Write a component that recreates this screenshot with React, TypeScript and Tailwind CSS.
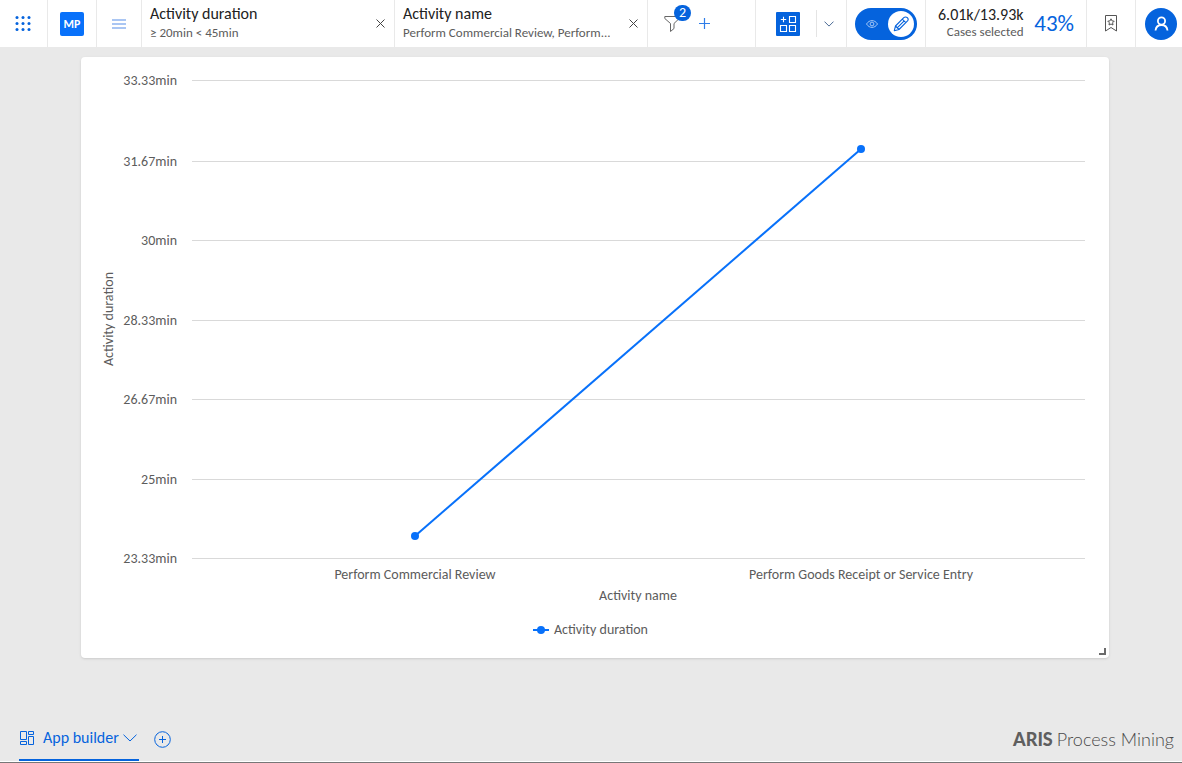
import { ReactNode } from "react";

const ticks = [
  { label: "33.33min", y: 23 },
  { label: "31.67min", y: 104 },
  { label: "30min", y: 183 },
  { label: "28.33min", y: 263 },
  { label: "26.67min", y: 342 },
  { label: "25min", y: 422 },
  { label: "23.33min", y: 501 },
];

const points = [
  { label: "Perform Commercial Review", x: 334, y: 479 },
  { label: "Perform Goods Receipt or Service Entry", x: 780, y: 92 },
];

const FilterCell = ({ title, value }: { title: string; value: string }) => (
  <div className="flex w-[253px] items-center justify-between border-r border-[#e9e9e9] px-2">
    <div className="min-w-0 pb-[2px]">
      <p className="text-[16px] leading-5 text-[#222]">{title}</p>
      <p className="truncate text-[13px] leading-[18px] text-[#5c5c5c]">
        {value}
      </p>
    </div>
    <button
      type="button"
      aria-label={`Remove ${title}`}
      className="flex h-6 w-3 items-center justify-center"
    >
      <svg width="9" height="9" viewBox="0 0 9 9" stroke="#444" fill="none">
        <path d="M.5.5l8 8M8.5.5l-8 8" />
      </svg>
    </button>
  </div>
);

const IconCell = ({
  label,
  className,
  children,
}: {
  label: string;
  className: string;
  children: ReactNode;
}) => (
  <button
    type="button"
    aria-label={label}
    className={`flex shrink-0 items-center justify-center border-r border-[#e9e9e9] ${className}`}
  >
    {children}
  </button>
);

const Header = () => (
  <header className="flex h-[47px] bg-white">
    <IconCell label="Applications" className="w-12 pr-[2px]">
      <svg width="16" height="16" viewBox="0 0 16 16" fill="#0563dd">
        {[1.5, 7.5, 13.5].map((y) =>
          [2, 8, 14].map((x) => <circle key={`${x}-${y}`} cx={x} cy={y} r="1.5" />)
        )}
      </svg>
    </IconCell>
    <IconCell label="Project" className="w-[49px]">
      <span className="flex h-6 w-6 items-center justify-center rounded-xs bg-[#0871fa] text-[12px] leading-6 font-bold text-white">
        MP
      </span>
    </IconCell>
    <IconCell label="Menu" className="w-[45px]">
      <svg width="14" height="10" viewBox="0 0 14 10" stroke="#8fb4f0" strokeWidth="1.6">
        <path d="M0 1h14M0 5h14M0 9h14" />
      </svg>
    </IconCell>
    <FilterCell title="Activity duration" value="≥ 20min < 45min" />
    <FilterCell
      title="Activity name"
      value="Perform Commercial Review, Perform..."
    />
    <div className="flex flex-1 items-center gap-4 border-r border-[#e9e9e9] pl-4">
      <button type="button" aria-label="Filters" className="relative">
        <svg width="16" height="18" viewBox="0 0 16 18" stroke="#666" fill="none">
          <path d="M.8 1.500h14.400v2L10 8.500v5l-3.500 3v-8L.8 3.500z" strokeLinejoin="round" />
        </svg>
        <span className="absolute -top-[10px] left-[10px] flex h-4 w-[17px] items-center justify-center rounded-full bg-[#0563dd] text-[14px] leading-4 text-white">
          2
        </span>
      </button>
      <button type="button" aria-label="Add filter" className="ml-[3px]">
        <svg width="11" height="11" viewBox="0 0 11 11" stroke="#2f7de8">
          <path d="M5.500 0v11M0 5.500h11" strokeWidth="1.200" />
        </svg>
      </button>
    </div>
    <div className="flex w-[91px] shrink-0 items-center border-r border-[#e9e9e9] pl-5">
      <button type="button" aria-label="Add component">
        <svg width="24" height="24" viewBox="0 0 24 24" fill="none" stroke="#fff" strokeWidth="1.100">
          <rect width="24" height="24" rx="1" fill="#0563dd" stroke="none" />
          <path d="M7.500 4.800v5.400M4.800 7.500h5.400" />
          <path d="M13.500 4.500h6v6h-6zM4.500 13.500h6v6h-6zM13.500 13.500h6v6h-6z" />
        </svg>
      </button>
      <span className="ml-4 h-[27px] w-px bg-[#e4e4e4]" />
      <button type="button" aria-label="More components" className="ml-[7px]">
        <svg width="10" height="6" viewBox="0 0 10 6" fill="none" stroke="#4a6a95">
          <path d="M.5.6L5 5.100 9.500.6" />
        </svg>
      </button>
    </div>
    <div className="flex w-[79px] shrink-0 items-center border-r border-[#e9e9e9] pl-2">
      <button
        type="button"
        role="switch"
        aria-checked="true"
        aria-label="Edit mode"
        className="flex h-8 w-[62px] items-center justify-between rounded-full bg-[#0563dd] pr-[3px] pl-[11px]"
      >
        <svg width="12" height="8" viewBox="0 0 12 8" fill="none" stroke="#a5c8f6">
          <path d="M.5 4C2 1.700 4 .6 6 .6S10 1.700 11.500 4C10 6.300 8 7.400 6 7.400S2 6.300.5 4z" />
          <circle cx="6" cy="4" r="1.900" />
        </svg>
        <span className="flex h-[26px] w-[26px] items-center justify-center rounded-full bg-white">
          <svg width="16" height="16" viewBox="0 0 16 16" fill="none" stroke="#0563dd" strokeWidth="1.100">
            <path d="M1.300 14.700l1.200-4.700L10.800 1.700a2.200 2.200 0 0 1 3.500 3.500L6 13.500zM2.500 10l3.500 3.500M9.300 3.200l3.500 3.500M4.200 11.800l7-7" strokeLinejoin="round" />
          </svg>
        </span>
      </button>
    </div>
    <div className="flex w-[161px] shrink-0 items-center justify-between border-r border-[#e9e9e9] px-3">
      <div className="pb-[2px] text-right">
        <p className="text-[16px] leading-[18px] text-[#222]">6.01k/13.93k</p>
        <p className="text-[13px] leading-4 text-[#5c5c5c]">Cases selected</p>
      </div>
      <p className="text-[23px] text-[#0563dd]">43%</p>
    </div>
    <IconCell label="Bookmarks" className="w-[49px]">
      <svg width="12" height="17" viewBox="0 0 12 17" fill="none" stroke="#555">
        <path d="M.5.500h11v15.500L6 12.500.500 16z" />
        <path d="M6 3.800l1 2.100 2.200.3-1.600 1.600.4 2.200L6 9l-2 1 .4-2.200-1.600-1.600L5 5.900z" />
      </svg>
    </IconCell>
    <button type="button" aria-label="Account" className="flex w-[46px] shrink-0 items-center pl-[9px]">
      <svg width="32" height="32" viewBox="0 0 32 32" fill="none" stroke="#fff" strokeWidth="1.800">
        <circle cx="16" cy="16" r="16" fill="#0563dd" stroke="none" />
        <circle cx="16.500" cy="13" r="3.600" />
        <path d="M10.500 22.500c.4-3.500 2.600-5.500 6-5.500s5.600 2 6 5.500" />
      </svg>
    </button>
  </header>
);

const Chart = () => (
  <svg
    viewBox="0 0 1028 601"
    className="block h-auto w-full text-[14px]"
    fill="#5c5c5c"
    role="img"
    aria-label="Activity duration by activity name"
  >
    {ticks.map(({ label, y }) => (
      <g key={label}>
        <rect x="111" y={y} width="893" height="1" fill="#d9d9d9" />
        <text x="96" y={y + 5} textAnchor="end">
          {label}
        </text>
      </g>
    ))}
    <text transform="translate(32 262) rotate(-90)" textAnchor="middle">
      Activity duration
    </text>
    <path
      d={`M${points.map(({ x, y }) => `${x} ${y}`).join("L")}`}
      stroke="#0871fa"
      strokeWidth="2"
    />
    {points.map(({ label, x, y }) => (
      <g key={label}>
        <circle cx={x} cy={y} r="4" fill="#0871fa" />
        <text x={x} y="522" textAnchor="middle">
          {label}
        </text>
      </g>
    ))}
    <text x="557" y="543" textAnchor="middle">
      Activity name
    </text>
    <path d="M452 573h16" stroke="#0871fa" strokeWidth="2" />
    <circle cx="460" cy="573" r="4" fill="#0871fa" />
    <text x="473" y="577">
      Activity duration
    </text>
    <path d="M1018 597h6v-6" fill="none" stroke="#6b6b6b" strokeWidth="2" />
  </svg>
);

const Footer = () => (
  <footer className="mt-auto">
    <div className="flex items-end justify-between pr-2 pl-[19px]">
      <div className="flex h-[44px]">
        <button
          type="button"
          className="flex w-[120px] items-center border-b-2 border-[#0563dd] text-[16px] whitespace-nowrap text-[#0563dd]"
        >
          <svg className="shrink-0" width="16" height="15" viewBox="0 0 16 15" fill="none" stroke="#0563dd">
            <path d="M1.500.500h6v8h-6zM9.500.500h5v3h-5zM9.500 5.500h5v8h-5zM1.500 10.500h6v3h-6z" />
          </svg>
          <span className="ml-2">App builder</span>
          <svg className="ml-1 shrink-0" width="14" height="8" viewBox="0 0 14 8" fill="none" stroke="#0563dd">
            <path d="M.5.700L7 7 13.500.700" />
          </svg>
        </button>
        <button type="button" aria-label="Add tab" className="ml-[15px]">
          <svg width="17" height="17" viewBox="0 0 17 17" fill="none" stroke="#0563dd">
            <circle cx="8.500" cy="8.500" r="7.800" />
            <path d="M8.500 5v7M5 8.500h7" />
          </svg>
        </button>
      </div>
      <p className="flex h-[44px] items-center gap-1 font-[Lato,sans-serif] text-[18px] font-light text-[#4a4a4a]">
        <b className="font-black text-[#5f5f5f]">ARIS</b>
        Process Mining
      </p>
    </div>
    <div className="h-px bg-white" />
    <div className="h-px bg-[#777]" />
  </footer>
);

const App = () => {
  return (
    <div className="flex min-h-screen flex-col bg-[#e9e9e9] font-[Carlito,Lato,sans-serif]">
      <Header />
      <main className="pt-[10px] pr-[73px] pl-[81px]">
        <section className="rounded-sm bg-white shadow-sm">
          <Chart />
        </section>
      </main>
      <Footer />
    </div>
  );
};

export default App;
